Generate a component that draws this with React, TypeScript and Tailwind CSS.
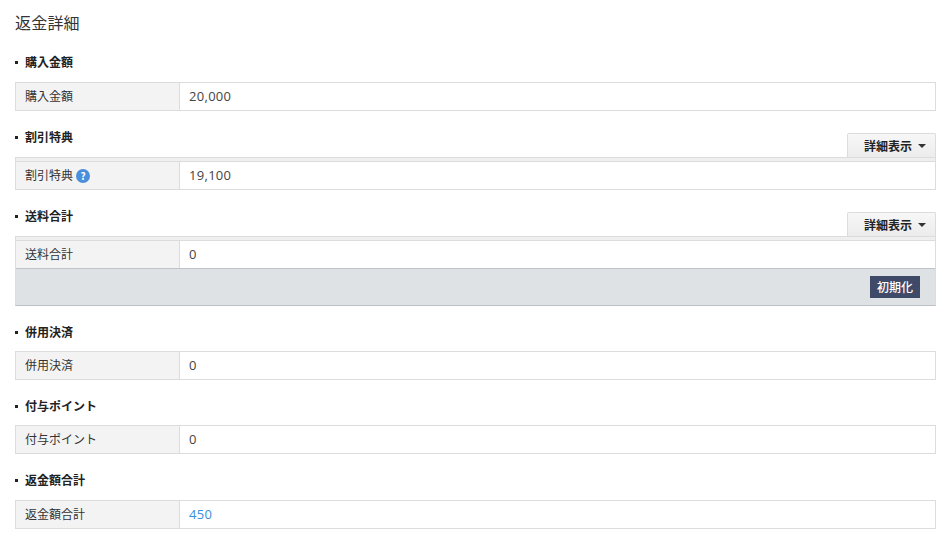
import { ReactNode } from 'react';

const font = '[font-family:"Noto_Sans_CJK_JP",sans-serif]';

function Row({ label, value }: { label: ReactNode; value: ReactNode }) {
  return (
    <div className="flex h-[27px] items-center text-[12px] leading-none text-[#333]">
      <div className="flex h-full w-[164px] items-center gap-[3px] border-r border-[#dcdcdc] bg-[#f3f3f3] pb-[2px] pl-[9px]">{label}</div>
      <div className="pl-[9px] font-['Open_Sans',sans-serif] text-[13px] tracking-[0.3px] text-[#444]">{value}</div>
    </div>
  );
}

function Section({ title, more, tight, children }: { title: string; more?: boolean; tight?: boolean; children: ReactNode }) {
  return (
    <section className="mb-4">
      <div className={`flex items-start justify-between ${tight ? 'h-[29px]' : 'h-[30px]'}`}>
        <h3 className="flex h-5 items-center text-[12px] font-bold text-[#222]">
          <span className="mr-[7px] h-[3px] w-[3px] bg-[#222]" />
          {title}
        </h3>
        {more && (
          <button className="mt-[6px] flex h-[24px] w-[89px] items-center gap-[6px] rounded-t-[2px] border border-b-0 border-[#dcdcdc] bg-gradient-to-b from-[#f7f7f7] to-[#ececec] pl-[16px] text-[12px] font-bold text-[#222]">
            詳細表示
            <span className="mt-[1px] h-0 w-0 border-x-[4px] border-t-[4px] border-x-transparent border-t-[#333]" />
          </button>
        )}
      </div>
      {children}
    </section>
  );
}

function Box({ band, children }: { band?: boolean; children: ReactNode }) {
  return (
    <div className="border border-[#dcdcdc] bg-white">
      {band && <div className="h-[4px] border-b border-[#dcdcdc] bg-[#efefef]" />}
      {children}
    </div>
  );
}

export default function App() {
  return (
    <div className={`h-[550px] w-[946px] overflow-hidden bg-white pl-[15px] pr-[10px] ${font}`}>
      <h2 className="flex h-[52px] items-start pt-[10px] text-[16px] font-normal leading-6 tracking-[0.2px] text-[#333]">返金詳細</h2>

      <Section title="購入金額">
        <Box>
          <Row label="購入金額" value="20,000" />
        </Box>
      </Section>

      <Section title="割引特典" more>
        <Box band>
          <Row
            label={
              <>
                割引特典
                <span className="mt-[2px] flex h-[14px] w-[14px] items-center justify-center rounded-full bg-[#4a8fdc] text-[10px] font-bold leading-none text-white">?</span>
              </>
            }
            value="19,100"
          />
        </Box>
      </Section>

      <Section title="送料合計" more>
        <div className="border border-[#dcdcdc] border-b-[#bcc0c4] bg-white">
          <div className="h-[4px] border-b border-[#dcdcdc] bg-[#efefef]" />
          <Row label="送料合計" value="0" />
          <div className="flex h-[37px] items-center justify-end border-t border-[#c0c4c8] bg-[#dfe2e5] pr-[15px]">
            <button className="flex h-[22px] w-[50px] items-center justify-center bg-[#3f4a68] text-[12px] font-medium text-white">初期化</button>
          </div>
        </div>
      </Section>

      <Section title="併用決済" tight>
        <Box>
          <Row label="併用決済" value="0" />
        </Box>
      </Section>

      <Section title="付与ポイント" tight>
        <Box>
          <Row label="付与ポイント" value="0" />
        </Box>
      </Section>

      <Section title="返金額合計">
        <Box>
          <Row label="返金額合計" value={<span className="text-[#3b8ede]">450</span>} />
        </Box>
      </Section>
    </div>
  );
}
